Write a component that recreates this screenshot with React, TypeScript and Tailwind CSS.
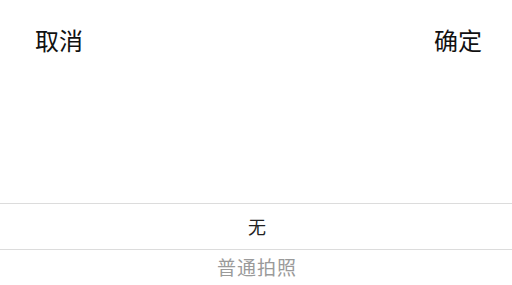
export default function App() {
  const font = { fontFamily: '"Noto Sans CJK SC", "Noto Sans", sans-serif' };
  return (
    <div className="flex h-[285px] w-full flex-col overflow-hidden bg-white" style={font}>
      {/* Header */}
      <div className="flex h-[79px] shrink-0 items-center justify-between pl-[35px] pr-[30px] text-[24px] leading-none text-[#111]">
        <button>取消</button>
        <button>确定</button>
      </div>
      <div className="h-[124px] shrink-0" />
      {/* Picker */}
      <div className="flex h-[47px] shrink-0 items-center justify-center border-y border-[#dcdcdc] pl-[2px] text-[18px] text-[#222]">
        无
      </div>
      <div className="flex h-[35px] shrink-0 items-center justify-center pl-[2px] text-[19px] tracking-[1px] text-[#9a9a9a]">
        普通拍照
      </div>
    </div>
  );
}
